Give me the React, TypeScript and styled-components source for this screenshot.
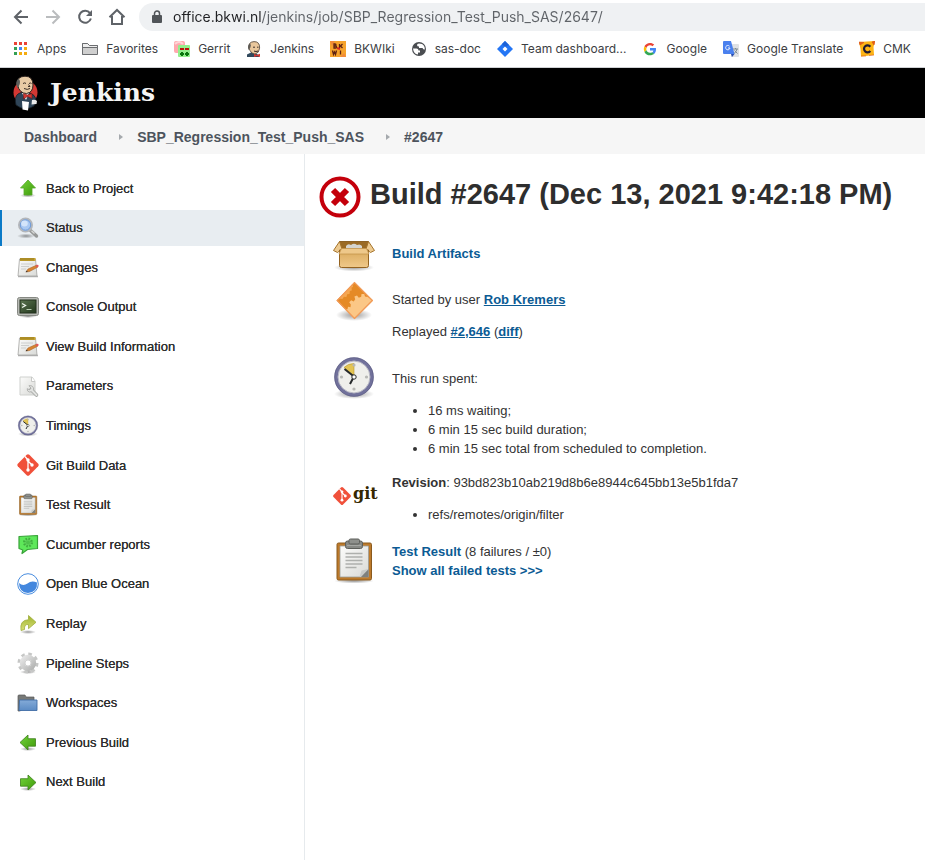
import React from "react";
import styled, { createGlobalStyle } from "styled-components";

const sans = `"Liberation Sans", Arial, Helvetica, sans-serif`;

const GlobalStyle = createGlobalStyle`
  *, *::before, *::after { box-sizing: border-box; }
  html, body, #root { height: 100%; }
  body {
    margin: 0;
    background: #fff;
    color: #333;
    font: 13px/19px ${sans};
  }
  ul, p, h1 { margin: 0; padding: 0; }
  svg { display: block; flex: none; }
`;

const Page = styled.div`
  min-height: 100%;
  display: flex;
  flex-direction: column;
`;

/* ---------- browser chrome ---------- */

const Toolbar = styled.div`
  display: flex;
  align-items: center;
  gap: 8px;
  height: 34px;
  padding-left: 9px;
`;

const ToolButton = styled.button`
  display: flex;
  align-items: center;
  justify-content: center;
  width: 24px;
  height: 24px;
  padding: 0;
  border: 0;
  background: none;
  color: #5f6368;
  &:disabled { color: #babcbe; }
`;

const AddressBar = styled.form`
  flex: 1;
  display: flex;
  align-items: center;
  gap: 11px;
  height: 28px;
  margin-left: 2px;
  padding-left: 13px;
  border-radius: 14px 0 0 14px;
  background: #eff1f3;
`;

const AddressInput = styled.input`
  flex: 1;
  min-width: 0;
  height: 24px;
  padding: 0;
  border: 0;
  outline: 0;
  font: 14px/24px Inter, Roboto, sans-serif;
  color: #5f6368;
  -webkit-text-fill-color: transparent;
  background: linear-gradient(to right, #202124 89px, #5f6368 89px);
  background-clip: text;
  -webkit-background-clip: text;
`;

const Bookmarks = styled.nav`
  display: flex;
  align-items: center;
  gap: 16px;
  height: 34px;
  padding: 0 0 4px 13px;
  border-bottom: 1px solid #cfd1d4;
  overflow: hidden;
`;

const Bookmark = styled.a`
  flex: none;
  display: flex;
  align-items: center;
  gap: 8px;
  color: #3c4043;
  font: 12px/16px Inter, Roboto, sans-serif;
  text-decoration: none;
`;

/* ---------- Jenkins header ---------- */

const Header = styled.header`
  display: flex;
  align-items: center;
  height: 50px;
  padding-left: 12px;
  background: #000;
`;

const Brand = styled.a`
  display: flex;
  align-items: center;
  gap: 10px;
  color: #f4f4f4;
  font: bold 25px/32px "DejaVu Serif", Georgia, serif;
  text-decoration: none;
`;

const Breadcrumbs = styled.nav`
  display: flex;
  align-items: center;
  gap: 14px;
  height: 36px;
  padding: 2px 24px 0;
  background: #f6f6f6;
`;

const Crumb = styled.a`
  color: #4d545d;
  font: bold 14px/20px ${sans};
  text-decoration: none;
`;

const Columns = styled.div`
  flex: 1;
  display: grid;
  grid-template-columns: 305px 1fr;
`;

const Sidebar = styled.nav`
  padding: 16px 0;
  border-right: 1px solid #e6eaed;
`;

const Tasks = styled.ul`
  display: grid;
  align-content: space-between;
  min-height: 630px;
  list-style: none;
`;

const TaskLink = styled.a<{ $active: boolean }>`
  display: flex;
  align-items: center;
  gap: 6px;
  height: 36px;
  padding-left: 14px;
  border-left: 2px solid ${(p) => (p.$active ? "#0b7ac7" : "transparent")};
  background: ${(p) => (p.$active ? "#e8edf1" : "transparent")};
  color: #2e2e2e;
  font-weight: 500;
  text-shadow: 0 0 0 #333;
  text-decoration: none;
`;

const Main = styled.main`
  padding: 22px 14px;
`;

const Title = styled.h1`
  display: flex;
  align-items: center;
  gap: 9px;
  color: #2e2e2e;
  font: bold 29px/36px ${sans};
`;

const TitleText = styled.span`
  padding-bottom: 6px;
`;

const Details = styled.div`
  padding: 12px 0 0 11px;
`;

const Detail = styled.section`
  display: flex;
  align-items: flex-start;
  gap: 14px;
`;

const DetailBody = styled.div<{ $top: number }>`
  padding-top: ${(p) => p.$top}px;
  min-height: 48px;
`;

const Para = styled.p`
  margin-bottom: 13px;
`;

const Bullets = styled.ul`
  margin: 0 0 13px;
  padding-left: 36px;
`;

const StrongLink = styled.a<{ $underlined?: boolean }>`
  color: #0b5b94;
  font-weight: bold;
  text-decoration: ${(p) => (p.$underlined ? "underline" : "none")};
`;

/* ---------- browser icons ---------- */

const BackIcon = () => (
  <svg width="18" height="18" viewBox="0 0 18 18" fill="none" stroke="currentColor" strokeWidth="2">
    <path d="M16 9H3M9.500 2.500L3 9l6.500 6.500" />
  </svg>
);
const ForwardIcon = () => (
  <svg width="18" height="18" viewBox="0 0 18 18" fill="none" stroke="currentColor" strokeWidth="2">
    <path d="M2 9h13M8.500 2.500L15 9l-6.500 6.500" />
  </svg>
);
const ReloadIcon = () => (
  <svg width="18" height="18" viewBox="0 0 18 18">
    <path d="M14 5.200A6 6 0 1 0 14.900 10.500" fill="none" stroke="currentColor" strokeWidth="2" />
    <path d="M16 2v6h-6z" fill="currentColor" />
  </svg>
);
const HomeIcon = () => (
  <svg width="18" height="18" viewBox="0 0 18 18" fill="none" stroke="currentColor" strokeWidth="2">
    <path d="M1.500 9.300L9 2l7.500 7.300M4 8v8h10V8" />
  </svg>
);
const LockIcon = () => (
  <svg width="10" height="14" viewBox="0 0 10 14">
    <path d="M2.500 6V3.500a2.500 2.500 0 0 1 5 0V6" fill="none" stroke="#505458" strokeWidth="1.500" />
    <rect x="0" y="5" width="10" height="8" rx="1" fill="#505458" />
  </svg>
);
const AppsIcon = () => {
  const colors = ["#ea4335", "#ea4335", "#ea4335", "#34a053", "#4285f4", "#f5ac0f", "#34a053", "#f5ac0f", "#f5ac0f"];
  return (
    <svg width="16" height="16" viewBox="0 0 16 16">
      {colors.map((c, i) => (
        <rect key={i} x={1 + (i % 3) * 5} y={1 + Math.floor(i / 3) * 5} width="3" height="3" fill={c} />
      ))}
    </svg>
  );
};
const FavoritesIcon = () => (
  <svg width="16" height="16" viewBox="0 0 16 16" stroke="#6b6d70">
    <path d="M.5 13.500v-11h5l2 2h8v9z" fill="#cfcfcf" />
    <path d="M.5 13.500v-11h5l2 2h8v2H.5" fill="#eee" />
  </svg>
);
const GerritIcon = () => (
  <svg width="16" height="16" viewBox="0 0 16 16">
    <rect width="11" height="12" rx="2" fill="#ffa9ae" />
    <path d="M1 3q4-4 8 0" stroke="#ffd5d7" strokeWidth="2" fill="none" />
    <rect x="4" y="4" width="12" height="12" rx="1" fill="#92ef8c" />
    <path d="M6 8h4M11 8h4" stroke="#b9110c" strokeWidth="2" />
    <path d="M6 13h4M8 11v4M11 13h4M13 11v4" stroke="#08760d" strokeWidth="2" />
  </svg>
);
const ButlerHeadIcon = () => (
  <svg width="16" height="16" viewBox="0 0 16 16">
    <path d="M1 16v-2.500L6 11l7 3v2z" fill="#31495d" />
    <path d="M3 7Q2 1 8 .6q6 0 5.600 6.500-.3 5-4.600 6Q4.500 12.500 3 7z" fill="#e9c79c" stroke="#4a3d33" strokeWidth=".8" />
    <path d="M2.500 9Q1 4 4 2.500q1.500 1 .4 4z" fill="#5d5a54" />
    <path d="M7 6.200h2M11 6.200h1.500M8 10q2 1 4 0" stroke="#40322b" strokeWidth="1" />
    <path d="M8 13l3 1 3-1.300V16l-3-1-3 1z" fill="#d33833" />
  </svg>
);
const BkwiIcon = () => (
  <svg width="16" height="16" viewBox="0 0 16 16">
    <rect width="16" height="16" fill="#f6a32c" />
    <path d="M0 0h5l-3 5zM16 16h-6l4-4z" fill="#f08a3c" />
    <path d="M4 3v4h1.500a1 1 0 0 0 0-2H4h1a1 1 0 0 0 0-2zM9.500 3v4M12.500 3l-2 2 2 2M2.500 9.500l1 4 1-2.500 1 2.500 1-4M10.500 9.500v4" fill="none" stroke="#5d2113" strokeWidth="1.300" />
    <path d="M7 7l3 1" stroke="#d42b21" strokeWidth="2" />
  </svg>
);
const GlobeIcon = () => (
  <svg width="16" height="16" viewBox="0 0 16 16">
    <circle cx="8" cy="8" r="7" fill="#4a4d51" />
    <path d="M2 7.500h3.500q2 0 2 2H9v2H7v2q-4.500-.6-5-6zM8 2.500q-2 0-2 1.500t2 1.500v1.500h3.500q1 2 2.300 1.500Q14 4.500 11 3z" fill="#fff" />
  </svg>
);
const DiamondIcon = () => (
  <svg width="16" height="16" viewBox="0 0 16 16">
    <path d="M8 0l8 8-8 8-8-8z" fill="#2476f5" />
    <path d="M8 0l4 4-4 2-3-3z" fill="#1b62d8" />
    <path d="M8 5.500L10.500 8 8 10.500 5.500 8z" fill="#fff" />
  </svg>
);
const GoogleIcon = () => (
  <svg width="16" height="16" viewBox="0 0 48 48">
    <path fill="#EA4335" d="M24 13c2.900 0 5.400 1 7.400 2.900l5.200-5.200C33.400 7.700 29.100 5.800 24 5.800 16.700 5.800 10.400 10 7.300 16.100l6.100 4.700C14.900 16.300 19 13 24 13z" />
    <path fill="#4285F4" d="M42 24.800c0-1.400-.1-2.500-.4-3.700H24v7.300h10.200c-.5 2.500-1.800 4.600-3.900 5.900l6 4.700c3.600-3.300 5.700-8.100 5.700-14.200z" />
    <path fill="#FBBC05" d="M13.400 28a11.500 11.500 0 0 1 0-7.300l-6.100-4.700a18.600 18.600 0 0 0 0 16.700z" />
    <path fill="#34A853" d="M24 43c5 0 9.200-1.600 12.300-4.500L30.300 33.800c-1.600 1.100-3.700 1.800-6.300 1.800-5 0-9.200-3.300-10.600-7.600l-6.100 4.700C10.400 38.800 16.700 43 24 43z" />
  </svg>
);
const TranslateIcon = () => (
  <svg width="16" height="16" viewBox="0 0 16 16">
    <path d="M8 3h7a1 1 0 0 1 1 1v11a1 1 0 0 1-1 1H8z" fill="#dfe1e4" />
    <path d="M1 0h7l3.500 13H1a1 1 0 0 1-1-1V1a1 1 0 0 1 1-1z" fill="#4a80ee" />
    <path d="M8 13h3.500L9 16z" fill="#2a4eb0" />
    <path d="M10 8h5M12.500 7v1M14 8q-.5 3-3 4.500M11.500 9.500l3 3" stroke="#7d8b94" fill="none" />
    <path d="M6.500 5.200A2.200 2.200 0 1 0 7 7H5" stroke="#e8effd" fill="none" />
  </svg>
);
const CmkIcon = () => (
  <svg width="16" height="16" viewBox="0 0 16 16">
    <path d="M0 1l16-1-1.500 6 .5 8-13 1.500L1.500 8z" fill="#fdb415" />
    <path d="M0 1l5 .5L1 4zM16 0l-3 1 2 3zM2 15h5M10 14.500l5-.5" fill="#e35b18" stroke="#d9541e" strokeWidth=".6" />
    <path d="M11.300 5.700A3.500 3.500 0 1 0 11.300 10" stroke="#201b33" strokeWidth="2.200" fill="none" />
  </svg>
);

/* ---------- Jenkins icons ---------- */

const Gradients = () => (
  <svg width="0" height="0" aria-hidden="true">
    <defs>
      <linearGradient id="green" x2="1" y2="1"><stop stopColor="#73d43a" /><stop offset="1" stopColor="#3f9a0a" /></linearGradient>
      <linearGradient id="lime" x2="0" y2="1"><stop stopColor="#9fb32c" /><stop offset="1" stopColor="#d8e07a" /></linearGradient>
      <linearGradient id="blue" x2="0" y2="1"><stop stopColor="#84abd8" /><stop offset="1" stopColor="#5b8bc4" /></linearGradient>
      <linearGradient id="paper" x2="1" y2="1"><stop stopColor="#fcfcfb" /><stop offset="1" stopColor="#d9dad7" /></linearGradient>
      <linearGradient id="metal" x2="1" y2="1"><stop stopColor="#e6e6e6" /><stop offset="1" stopColor="#b2b3b2" /></linearGradient>
      <linearGradient id="carton" x2="0" y2="1"><stop stopColor="#d9a95c" /><stop offset="1" stopColor="#f0c98a" /></linearGradient>
      <linearGradient id="screen" x2="1" y2="1"><stop stopColor="#5d7752" /><stop offset="1" stopColor="#22361c" /></linearGradient>
      <radialGradient id="shadow"><stop stopColor="#000" stopOpacity=".4" /><stop offset="1" stopColor="#000" stopOpacity="0" /></radialGradient>
    </defs>
  </svg>
);

const ButlerLogo = () => (
  <svg width="28" height="36" viewBox="0 0 28 36">
    <ellipse cx="13.500" cy="17.500" rx="12" ry="12" fill="#d33833" />
    <path d="M4 30Q2 22 6 19l6-3 6 2q5 2 6 6l-2 7-4 2H9z" fill="#2f4558" stroke="#151e26" strokeWidth=".8" />
    <path d="M10 18l4 7 3-7z" fill="#fff" />
    <path d="M5.500 10Q4 1.500 13 1.200 21 1.200 21 10q0 7.500-6.500 8.500Q7.500 18.500 5.500 10z" fill="#e8cba6" stroke="#2d241f" />
    <path d="M5.500 13Q2.500 7 6.500 3.500q2.500 2 .9 6.500z" fill="#5e5f5c" />
    <path d="M11 8.500q2-1.300 3 0M17 8.500q1.500-1 2.500 0M12 13.500q3.500 1.800 6 0M16.500 9.500l1.500 2h-2" stroke="#3b2e27" fill="none" />
    <path d="M11.500 18.500l4 1.500 4.500-1.500v5l-4.500-2-4 2.500z" fill="#d33833" stroke="#6e1512" strokeWidth=".6" />
    <path d="M10 26l7 1-1 8.500-5.500-1z" fill="#fff" />
    <path d="M20 25q3-1 5 1l-.5 3-5 .5z" fill="#e9e9e9" />
  </svg>
);

const Small = ({ children }: { children: React.ReactNode }) => (
  <svg width="24" height="24" viewBox="0 0 24 24">{children}</svg>
);

const UpIcon = () => (
  <Small>
    <ellipse cx="12" cy="19.500" rx="8" ry="2" fill="url(#shadow)" />
    <path d="M12 4l7.500 8H16v7H8v-7H4.500z" fill="url(#green)" stroke="#56a82a" strokeWidth=".8" />
  </Small>
);
const LeftIcon = () => (
  <Small>
    <ellipse cx="12" cy="19" rx="8" ry="2" fill="url(#shadow)" />
    <path d="M4 12.500L12 5v3.700h7.500v7.500H12V20z" fill="url(#green)" stroke="#3c7d1a" strokeWidth=".8" />
  </Small>
);
const RightIcon = () => (
  <Small>
    <ellipse cx="12" cy="19" rx="8" ry="2" fill="url(#shadow)" />
    <path d="M20 12.500L12 5v3.700H4.500v7.500H12V20z" fill="url(#green)" stroke="#3c7d1a" strokeWidth=".8" />
  </Small>
);
const SearchIcon = () => (
  <Small>
    <ellipse cx="10" cy="20" rx="9" ry="2.500" fill="url(#shadow)" />
    <path d="M14.500 14.500l6 5.500" stroke="#979998" strokeWidth="3.400" strokeLinecap="round" />
    <path d="M15.500 14.800l3 2.700" stroke="#d5d6d5" strokeWidth="1.500" />
    <circle cx="9.500" cy="9" r="6.500" fill="#a9c8f2" stroke="#b3b6ba" strokeWidth="2" />
    <circle cx="9.500" cy="9" r="5.200" fill="none" stroke="#6f9bd8" />
    <ellipse cx="8.500" cy="7.500" rx="3.300" ry="3" fill="#d3e4fa" />
  </Small>
);
const NotepadIcon = () => (
  <Small>
    <path d="M2 21.500h20" stroke="#000" strokeOpacity=".3" strokeWidth="1.500" />
    <path d="M3.500 4h16l1.500 17H2z" fill="url(#paper)" stroke="#a4a5a2" strokeWidth=".8" />
    <path d="M4 3h15.500v3H4z" fill="#c9a52e" />
    <path d="M5 3v2.500M7 3v2.500M9 3v2.500M11 3v2.500M13 3v2.500M15 3v2.500M17 3v2.500" stroke="#76611a" strokeWidth=".7" />
    <path d="M5 9h12M5 11.500h8M5 14h5" stroke="#c4c5c4" strokeWidth=".8" />
    <path d="M10 17l2-3 9-4 1 2-8.500 4.500z" fill="#d8842f" stroke="#a9662a" strokeWidth=".6" />
    <path d="M19.500 10.700l1.500-.9 1.500.2-.2 1.700-1.600.9z" fill="#e0575b" />
    <path d="M9.500 17.300l1.500-1.700.7 1.200z" fill="#333" />
  </Small>
);
const TerminalIcon = () => (
  <Small>
    <ellipse cx="12" cy="21.500" rx="9" ry="1.500" fill="url(#shadow)" />
    <rect x="1.500" y="2.500" width="21" height="18" rx="2" fill="#b7b9b4" stroke="#868983" />
    <rect x="4" y="5" width="16" height="13" fill="url(#screen)" stroke="#23301d" />
    <path d="M6 8.500l3.500 2L6 12.500" fill="none" stroke="#eff5ed" strokeWidth="1.300" />
    <path d="M10.500 14.500h5" stroke="#b9cdb1" />
  </Small>
);
const ParametersIcon = () => (
  <Small>
    <path d="M4 3h12l3 4v14H4z" fill="url(#paper)" stroke="#cfd1ce" />
    <path d="M15.500 3v4.500H19" fill="#fff" stroke="#c8c9c7" />
    <path d="M15 15.500l5.500 5.500" stroke="#a3a5a2" strokeWidth="3.600" strokeLinecap="round" />
    <path d="M13 11.700q4-.7 4.600 3.300-.6 3.500-4.200 3-2.600-.8-2.200-3.300l2.500 1.200 1.400-1.800z" fill="#e6e7e5" stroke="#a3a5a2" strokeWidth=".8" />
    <path d="M15.500 16l5 5" stroke="#e1e2e0" strokeWidth="2" strokeLinecap="round" />
  </Small>
);
const ClockArt = () => (
  <>
    <ellipse cx="24" cy="40" rx="20" ry="5" fill="url(#shadow)" />
    <circle cx="24" cy="23" r="17.800" fill="#efefeb" stroke="#71719b" strokeWidth="3.600" />
    <circle cx="24" cy="23" r="19.400" fill="none" stroke="#52527a" strokeWidth=".6" />
    <circle cx="24" cy="23" r="16" fill="none" stroke="#b7b7c4" />
    <path d="M24 23L14 13.500q4-4 10-4z" fill="#e3c454" stroke="#b9972a" strokeWidth=".6" />
    <g fill="#b7b8b4"><circle cx="24" cy="11" r="1.600" /><circle cx="24" cy="35" r="1.600" /><circle cx="11.500" cy="23" r="1.600" /><circle cx="36.500" cy="23" r="1.600" /></g>
    <path d="M14.500 15l9.500 7.500-4 7.500" fill="none" stroke="#26292a" strokeWidth="2" />
    <circle cx="24" cy="23" r="2.200" fill="#fff" stroke="#26292a" />
  </>
);
const SmallClockIcon = () => <svg width="24" height="24" viewBox="0 0 48 48"><ClockArt /></svg>;
const ClockIcon = () => <svg width="48" height="48" viewBox="0 0 48 48"><ClockArt /></svg>;

const GitMark = () => (
  <>
    <path d="M10.700 1.800q1.300-1.200 2.600 0l8.900 8.900q1.200 1.300 0 2.600l-8.900 8.900q-1.300 1.200-2.600 0l-8.900-8.900q-1.200-1.300 0-2.600z" fill="#f0503a" />
    <path d="M9 3.500l3 3.500v10M12 8l4 4" stroke="#fff" strokeWidth="1.300" fill="none" />
    <g fill="#fff"><circle cx="12" cy="7" r="1.700" /><circle cx="16" cy="12" r="1.700" /><circle cx="12" cy="17" r="1.700" /></g>
  </>
);
const GitIcon = () => <Small><GitMark /></Small>;

const ClipboardArt = () => (
  <>
    <ellipse cx="24" cy="44" rx="20" ry="2.500" fill="url(#shadow)" />
    <rect x="7" y="6" width="34.500" height="37" rx="1.500" fill="#bd7a2b" stroke="#8a5a1e" />
    <path d="M10 9h28.500v31H10z" fill="url(#paper)" stroke="#9d9e9a" strokeWidth=".8" />
    <path d="M15.500 16.500h17M15.500 20h17M15.500 23.500h17M15.500 27h17M15.500 30.500h11" stroke="#aeb0ad" strokeWidth="1.300" />
    <path d="M30 40l8.500-8v8z" fill="#7e807d" />
    <path d="M29.500 40l2-6.500 7-1.500-7.500 8z" fill="#c9cac7" />
    <rect x="15.500" y="4" width="17" height="7.500" rx="2" fill="#878985" stroke="#5d5f5b" />
    <rect x="19" y="2" width="10.500" height="5" rx="1.500" fill="#8e908c" stroke="#5d5f5b" />
    <path d="M17 8.500h14" stroke="#a5a7a3" />
  </>
);
const SmallClipboardIcon = () => <svg width="24" height="24" viewBox="0 0 48 48"><ClipboardArt /></svg>;
const ClipboardIcon = () => <svg width="48" height="48" viewBox="0 0 48 48"><ClipboardArt /></svg>;

const CucumberIcon = () => (
  <Small>
    <path d="M3 4.500l18.500-1V16.500l-10 1-5.500 4 .8-3.500L3 16.500z" fill="#5ee85a" stroke="#38a338" strokeWidth="1.200" strokeLinejoin="round" />
    <circle cx="12" cy="10.500" r="3.800" fill="#62d65e" stroke="#3fae3d" strokeWidth="2.400" strokeDasharray="1.600 1.380" />
    <circle cx="12" cy="10.500" r="2" fill="#4dc24a" />
  </Small>
);
const OceanIcon = () => (
  <Small>
    <circle cx="12" cy="12" r="10.300" fill="#fff" stroke="#4a8ee0" />
    <path d="M3 11q4 3.500 8.500.5 4-3.500 9.500-1 .8 9.500-9 10.500Q3 20.500 3 11z" fill="#4387de" />
  </Small>
);
const ReplayIcon = () => (
  <Small>
    <ellipse cx="12" cy="20" rx="8" ry="2" fill="url(#shadow)" />
    <path d="M5 18.500Q3.500 8 12.500 7.700V3.500l7.500 6.800-7.500 6.400v-4.200Q8 12 8.500 17.500z" fill="url(#lime)" stroke="#a0ad3b" strokeWidth=".8" />
  </Small>
);
const GearIcon = () => (
  <Small>
    <ellipse cx="12" cy="21" rx="8" ry="2" fill="url(#shadow)" />
    <circle cx="12" cy="12" r="9" fill="none" stroke="#c6c7c6" strokeWidth="3" strokeDasharray="3.500 3.570" />
    <circle cx="12" cy="12" r="5.700" fill="none" stroke="url(#metal)" strokeWidth="5" />
    <circle cx="12" cy="12" r="3" fill="#fff" stroke="#bebfbe" strokeWidth=".7" />
  </Small>
);
const FolderIcon = () => (
  <Small>
    <path d="M2 20V5q0-1 1-1h6l1 2h8v4L4 20z" fill="#777977" stroke="#565856" strokeWidth=".7" />
    <path d="M3.500 9h17.500v10.500H3z" fill="url(#blue)" stroke="#416da6" strokeWidth=".9" />
  </Small>
);

const FailedIcon = () => (
  <svg width="42" height="42" viewBox="0 0 42 42">
    <circle cx="21" cy="21" r="18.500" fill="#fff" stroke="#c4000b" strokeWidth="4" />
    <path d="M14 14l14 14M28 14L14 28" stroke="#c4000b" strokeWidth="6" />
  </svg>
);
const BoxIcon = () => (
  <svg width="48" height="48" viewBox="0 0 48 48">
    <ellipse cx="24" cy="37.500" rx="20" ry="4" fill="url(#shadow)" />
    <path d="M9.500 11.500h29L38 19H10z" fill="#9a6a25" stroke="#8d6226" />
    <path d="M16 16q2-3 5-1 3-2.500 6 0 3-1.500 5 1v3H16z" fill="#d5d4cf" />
    <path d="M9.500 11.500L3.500 20.500l4 2L12 19zM38.500 11.500l6 9-4 2L36 19z" fill="#edca90" stroke="#a5742c" />
    <path d="M9.500 20h29v15.500q0 2-2 2h-25q-2 0-2-2z" fill="url(#carton)" stroke="#946321" />
    <path d="M11.500 18.500h25l2.500 5.500h-30z" fill="#eec88a" stroke="#c4944b" strokeWidth=".8" />
  </svg>
);
const CauseIcon = () => (
  <svg width="48" height="48" viewBox="0 0 48 48">
    <ellipse cx="24" cy="37" rx="18" ry="6" fill="url(#shadow)" />
    <path d="M24.500 4L43 22.500 24.500 41 6.500 22.500z" fill="#e58a26" />
    <path d="M22.500 6l.5 3-1.500.5.300 3-2 .4-.3 3-2.300.3-.8 2.800-2.500-.2-1.500 2.200-3-.6L7.500 22.500z" fill="#f5a751" />
    <path d="M41.500 21L43 22.500 24.500 41 15 31.500l2.500-.3.500-2.500 2.500.5.300-2.700-1.600-2.300 2-2 2.500 1.200 1.500-2.200-.8-2.700 2.600-1 1.800 2.200 2.400-.9.300-2.700h2.800l.7 2.500 2.700.3z" fill="#fbc786" />
    <path d="M24.500 4.700L42.300 22.500 24.500 40.300 7.200 22.500z" fill="none" stroke="#f29a58" strokeWidth="1.200" />
  </svg>
);
const GitLogo = () => (
  <svg width="48" height="48" viewBox="0 0 48 48">
    <svg x="2" y="15" width="20" height="20" viewBox="0 0 24 24"><GitMark /></svg>
    <text x="23" y="28" fill="#362701" fontFamily="DejaVu Serif, serif" fontWeight="bold" fontSize="16">git</text>
  </svg>
);
const CrumbArrow = () => (
  <svg width="12" height="8" viewBox="0 0 12 8"><path d="M8 1l4 3-4 3z" fill="#a5a9ad" /></svg>
);

/* ---------- data ---------- */

const bookmarks: [string, React.FC][] = [
  ["Apps", AppsIcon],
  ["Favorites", FavoritesIcon],
  ["Gerrit", GerritIcon],
  ["Jenkins", ButlerHeadIcon],
  ["BKWIki", BkwiIcon],
  ["sas-doc", GlobeIcon],
  ["Team dashboard...", DiamondIcon],
  ["Google", GoogleIcon],
  ["Google Translate", TranslateIcon],
  ["CMK", CmkIcon],
];

const tasks: [string, React.FC][] = [
  ["Back to Project", UpIcon],
  ["Status", SearchIcon],
  ["Changes", NotepadIcon],
  ["Console Output", TerminalIcon],
  ["View Build Information", NotepadIcon],
  ["Parameters", ParametersIcon],
  ["Timings", SmallClockIcon],
  ["Git Build Data", GitIcon],
  ["Test Result", SmallClipboardIcon],
  ["Cucumber reports", CucumberIcon],
  ["Open Blue Ocean", OceanIcon],
  ["Replay", ReplayIcon],
  ["Pipeline Steps", GearIcon],
  ["Workspaces", FolderIcon],
  ["Previous Build", LeftIcon],
  ["Next Build", RightIcon],
];

export default function App() {
  return (
    <Page>
      <GlobalStyle />
      <Toolbar>
        <ToolButton aria-label="Back"><BackIcon /></ToolButton>
        <ToolButton aria-label="Forward" disabled><ForwardIcon /></ToolButton>
        <ToolButton aria-label="Reload"><ReloadIcon /></ToolButton>
        <ToolButton aria-label="Home"><HomeIcon /></ToolButton>
        <AddressBar onSubmit={(e) => e.preventDefault()}>
          <LockIcon />
          <AddressInput
            aria-label="Address"
            spellCheck={false}
            defaultValue="office.bkwi.nl/jenkins/job/SBP_Regression_Test_Push_SAS/2647/"
          />
        </AddressBar>
      </Toolbar>
      <Bookmarks aria-label="Bookmarks">
        {bookmarks.map(([label, Icon]) => (
          <Bookmark key={label} href="#"><Icon />{label}</Bookmark>
        ))}
      </Bookmarks>
      <Header>
        <Brand href="#"><ButlerLogo />Jenkins</Brand>
      </Header>
      <Breadcrumbs aria-label="Breadcrumb">
        <Crumb href="#">Dashboard</Crumb>
        <CrumbArrow />
        <Crumb href="#">SBP_Regression_Test_Push_SAS</Crumb>
        <CrumbArrow />
        <Crumb href="#">#2647</Crumb>
      </Breadcrumbs>
      <Columns>
        <Sidebar aria-label="Tasks">
          <Tasks>
            {tasks.map(([label, Icon]) => (
              <li key={label}>
                <TaskLink href="#" $active={label === "Status"}><Icon />{label}</TaskLink>
              </li>
            ))}
          </Tasks>
          <Gradients />
        </Sidebar>
        <Main>
          <Title>
            <FailedIcon />
            <TitleText>Build #2647 (Dec 13, 2021 9:42:18 PM)</TitleText>
          </Title>
          <Details>
            <Detail>
              <BoxIcon />
              <DetailBody $top={14}><StrongLink href="#">Build Artifacts</StrongLink></DetailBody>
            </Detail>
            <Detail>
              <CauseIcon />
              <DetailBody $top={12}>
                <Para>Started by user <StrongLink href="#" $underlined>Rob Kremers</StrongLink></Para>
                <Para>Replayed <StrongLink href="#" $underlined>#2,646</StrongLink> (<StrongLink href="#" $underlined>diff</StrongLink>)</Para>
              </DetailBody>
            </Detail>
            <Detail>
              <ClockIcon />
              <DetailBody $top={15}>
                <Para>This run spent:</Para>
                <Bullets>
                  <li>16 ms waiting;</li>
                  <li>6 min 15 sec build duration;</li>
                  <li>6 min 15 sec total from scheduled to completion.</li>
                </Bullets>
              </DetailBody>
            </Detail>
            <Detail>
              <GitLogo />
              <DetailBody $top={2}>
                <Para><b>Revision</b>: 93bd823b10ab219d8b6e8944c645bb13e5b1fda7</Para>
                <Bullets><li>refs/remotes/origin/filter</li></Bullets>
              </DetailBody>
            </Detail>
            <Detail>
              <ClipboardIcon />
              <DetailBody $top={5}>
                <StrongLink href="#">Test Result</StrongLink> (8 failures / ±0)<br />
                <StrongLink href="#">Show all failed tests &gt;&gt;&gt;</StrongLink>
              </DetailBody>
            </Detail>
          </Details>
        </Main>
      </Columns>
    </Page>
  );
}
